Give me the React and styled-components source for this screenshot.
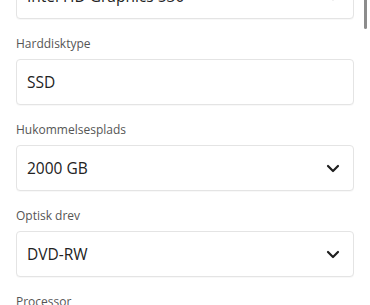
import { useLayoutEffect, useRef } from 'react'
import styled, { createGlobalStyle } from 'styled-components'

const GlobalStyle = createGlobalStyle`
  html, body {
    margin: 0;
    padding: 0;
    background: #ffffff;
    font-family: "Open Sans", "Noto Sans", sans-serif;
  }
`

const fields = [
  { label: 'Grafikkort', value: 'Intel HD Graphics 530', select: true },
  { label: 'Harddisktype', value: 'SSD', select: false },
  { label: 'Hukommelsesplads', value: '2000 GB', select: true },
  { label: 'Optisk drev', value: 'DVD-RW', select: true },
  { label: 'Processor', value: 'Intel Core i5', select: true },
]

function Chevron() {
  return (
    <svg width="14" height="9" viewBox="0 0 14 9" fill="none">
      <path d="M2 2 L7 7 L12 2" stroke="#1f1f1f" strokeWidth="2.2" strokeLinecap="round" strokeLinejoin="round" />
    </svg>
  )
}

function App() {
  const ref = useRef(null)

  useLayoutEffect(() => {
    if (ref.current) ref.current.scrollTop = 67
  }, [])

  return (
    <>
      <GlobalStyle />
      <Screen>
        <Scroller ref={ref}>
          <Form>
            {fields.map((f) => (
              <Field key={f.label}>
                <Label>{f.label}</Label>
                <Box>
                  <Value>{f.value}</Value>
                  {f.select && <Chevron />}
                </Box>
              </Field>
            ))}
          </Form>
        </Scroller>
        <Thumb />
      </Screen>
    </>
  )
}

export default App

const Screen = styled.div`
  position: relative;
  width: 370px;
  height: 305px;
  overflow: hidden;
`

const Scroller = styled.div`
  height: 100%;
  overflow-y: scroll;
  scrollbar-width: none;

  &::-webkit-scrollbar {
    display: none;
  }
`

const Form = styled.div`
  display: flex;
  flex-direction: column;
  gap: 16px;
  padding: 16px 16px 400px;
`

const Field = styled.div`
  display: flex;
  flex-direction: column;
  gap: 6px;
`

const Label = styled.div`
  font-size: 12px;
  line-height: 18px;
  font-weight: 500;
  color: #555555;
`

const Box = styled.div`
  height: 46px;
  box-sizing: border-box;
  display: flex;
  align-items: center;
  justify-content: space-between;
  padding-left: 10px;
  padding-right: 13px;
  border: 1px solid #e4e4e4;
  border-radius: 4px;
  background: #ffffff;
  box-shadow: 0 1px 1px rgba(0, 0, 0, 0.03);
`

const Value = styled.span`
  font-size: 15.5px;
  color: #222222;
`

const Thumb = styled.div`
  position: absolute;
  top: 0;
  right: 3px;
  width: 3px;
  height: 29px;
  border-radius: 0 0 2px 2px;
  background: #8c8c8c;
`
